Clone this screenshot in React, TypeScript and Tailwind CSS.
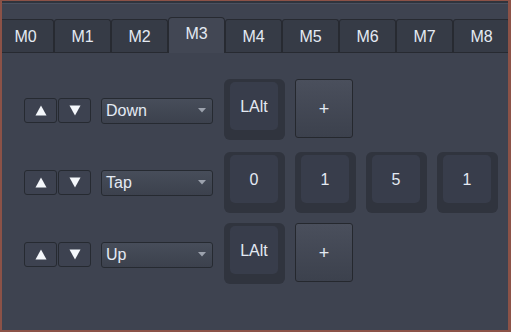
import React from "react";

const tabs = ["M0", "M1", "M2", "M3", "M4", "M5", "M6", "M7", "M8"];

const rows: { mode: string; keys: string[]; plus: boolean }[] = [
  { mode: "Down", keys: ["LAlt"], plus: true },
  { mode: "Tap", keys: ["0", "1", "5", "1", ""], plus: false },
  { mode: "Up", keys: ["LAlt"], plus: true },
];

function Arrow({ up }: { up: boolean }) {
  return (
    <svg width="12" height="11" viewBox="0 0 12 11">
      {up ? (
        <polygon points="6,0.5 11.5,10.5 0.5,10.5" fill="#f4f7fb" />
      ) : (
        <polygon points="0.5,0.5 11.5,0.5 6,10.5" fill="#f4f7fb" />
      )}
    </svg>
  );
}

function Dropdown({ value }: { value: string }) {
  return (
    <div className="ml-[10px] flex h-[26px] w-[112px] shrink-0 items-center justify-between rounded-[3px] border border-[#262a31] bg-gradient-to-b from-[#474d5a] to-[#3c414d] pl-[4px] pr-[6px]">
      <span className="pt-px">{value}</span>
      <svg width="8" height="5" viewBox="0 0 8 5">
        <polygon points="0,0 8,0 4,4.5" fill="#9ca2ad" />
      </svg>
    </div>
  );
}

function KeyCap({ label }: { label: string }) {
  return (
    <div className="h-[61px] w-[61px] shrink-0 rounded-[6px] bg-[#30343e] pb-[10px] pl-[6px] pr-[7px] pt-[3px]">
      <div className="flex h-full w-full items-center justify-center rounded-[5px] bg-[#383d4b] pt-[2px]">
        {label}
      </div>
    </div>
  );
}

export default function App() {
  return (
    <div
      className="flex h-[332px] w-[511px] flex-col overflow-hidden border-b-2 border-l-2 border-r-[3px] border-t border-[#8c5247] bg-[#3e4350] text-[16px] text-[#e4eaf3]"
      style={{ fontFamily: '"Liberation Sans", Arial, sans-serif' }}
    >
      {/* strip of the widget above */}
      <div className="h-[3px] shrink-0 border-b border-[#4b5160] bg-[#30343d]" />

      {/* macro tabs */}
      <div className="flex h-[49px] shrink-0 items-end border-b border-[#272a31]">
        <div className="-ml-[5px] flex items-end">
          {tabs.map((t) =>
            t === "M3" ? (
              <div
                key={t}
                className="relative -mb-px flex h-[36px] w-[57px] shrink-0 items-center justify-center rounded-t-[4px] border border-b-0 border-[#272a31] bg-[#424754] pb-[3px]"
              >
                {t}
              </div>
            ) : (
              <div
                key={t}
                className="flex h-[33px] w-[57px] shrink-0 items-center justify-center rounded-t-[3px] border border-b-0 border-[#272a31] bg-[#363b46] pt-[1px]"
              >
                {t}
              </div>
            )
          )}
        </div>
      </div>

      {/* sequence rows */}
      <div className="flex flex-col gap-[11px] pl-[22px] pt-[27px]">
        {rows.map((r, i) => (
          <div key={i} className="flex h-[61px] items-center">
            <button className="flex h-[25px] w-[33px] shrink-0 items-center justify-center rounded-[3px] border border-[#262a31] bg-[#3d4250]">
              <Arrow up />
            </button>
            <button className="ml-px flex h-[25px] w-[33px] shrink-0 items-center justify-center rounded-[3px] border border-[#262a31] bg-[#3d4250]">
              <Arrow up={false} />
            </button>
            <Dropdown value={r.mode} />
            <div className="ml-[11px] flex shrink-0 gap-[10px]">
              {r.keys.map((k, j) => (
                <KeyCap key={j} label={k} />
              ))}
              {r.plus && (
                <button className="mb-[4px] flex h-[59px] w-[58px] shrink-0 items-center justify-center rounded-[3px] border border-[#25282e] bg-gradient-to-b from-[#4a4f5c] to-[#3c414d] pt-[2px] text-[18px]">
                  +
                </button>
              )}
            </div>
          </div>
        ))}
      </div>
    </div>
  );
}
